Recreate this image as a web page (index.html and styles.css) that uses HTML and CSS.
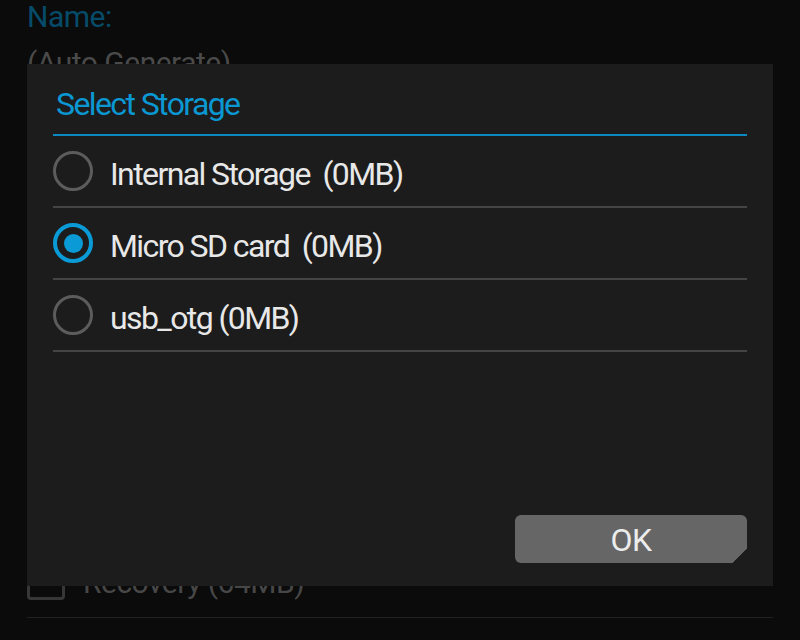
FILE: index.html
```html
<!DOCTYPE html>
<html>
<head>
<meta charset="utf-8">
<link rel="stylesheet" href="styles.css">
</head>
<body>
<div class="screen">
  <div class="bg-content">
    <div class="bg-label">Name:</div>
    <div class="bg-value">(Auto Generate)</div>
    <div class="bg-spacer"></div>
    <div class="bg-row">
      <span class="bg-check"></span>
      <span class="bg-row-text">Recovery (64MB)</span>
    </div>
    <div class="bg-divider"></div>
  </div>

  <div class="dialog">
    <div class="dialog-title">Select Storage</div>
    <div class="option">
      <span class="radio"></span>
      <span class="option-text">Internal Storage&nbsp; (0MB)</span>
    </div>
    <div class="option">
      <span class="radio radio-on"></span>
      <span class="option-text">Micro SD card&nbsp; (0MB)</span>
    </div>
    <div class="option">
      <span class="radio"></span>
      <span class="option-text">usb_otg (0MB)</span>
    </div>
    <div class="dialog-fill"></div>
    <div class="dialog-actions">
      <div class="ok-btn">OK</div>
    </div>
  </div>
</div>
</body>
</html>
```

FILE: styles.css
```css
html, body {
  margin: 0;
  padding: 0;
  background: #0b0b0b;
}
body {
  width: 800px;
  height: 640px;
  overflow: hidden;
  font-family: Roboto, "Liberation Sans", sans-serif;
}
.screen {
  position: relative;
  width: 800px;
  height: 640px;
  background: #0b0b0b;
}
.bg-content {
  display: flex;
  flex-direction: column;
  padding: 0 27px;
  height: 640px;
  box-sizing: border-box;
}
.bg-label {
  color: #064b69;
  font-size: 30px;
  letter-spacing: -0.5px;
  line-height: 34px;
}
.bg-value {
  color: #4a4a4a;
  font-size: 30px;
  letter-spacing: -0.5px;
  line-height: 34px;
  margin-top: 12px;
}
.bg-spacer {
  flex: 1;
}
.bg-row {
  display: flex;
  align-items: center;
  gap: 18px;
  height: 40px;
  margin-bottom: 16px;
}
.bg-check {
  width: 32px;
  height: 32px;
  border: 3px solid #373737;
  border-radius: 4px;
}
.bg-row-text {
  color: #474747;
  font-size: 30px;
  letter-spacing: -0.5px;
  margin-top: 2px;
}
.bg-divider {
  height: 1px;
  background: #222;
  margin-bottom: 22px;
}

.dialog {
  position: absolute;
  left: 27px;
  top: 64px;
  width: 746px;
  height: 522px;
  background: #1c1c1c;
  box-sizing: border-box;
  padding: 0 26px 23px 26px;
  display: flex;
  flex-direction: column;
}
.dialog-title {
  height: 70px;
  border-bottom: 2px solid #0a88bf;
  color: #0b98d2;
  font-size: 32px;
  letter-spacing: -1.6px;
  line-height: 80px;
  padding-left: 3px;
  flex: none;
}
.option {
  display: flex;
  align-items: center;
  height: 70px;
  border-bottom: 2px solid #444;
  flex: none;
}
.radio {
  width: 34px;
  height: 34px;
  border: 3px solid #5c5c5c;
  border-radius: 50%;
  margin-right: 17px;
  display: flex;
  align-items: center;
  justify-content: center;
  flex: none;
}
.radio-on {
  border: 4px solid #0a9ad6;
  width: 32px;
  height: 32px;
}
.radio-on::after {
  content: "";
  width: 19px;
  height: 19px;
  border-radius: 50%;
  background: #0a9ad6;
}
.option-text {
  color: #e8e8e8;
  font-size: 32px;
  letter-spacing: -1.6px;
  margin-top: 5px;
}
.dialog-fill {
  flex: 1;
}
.dialog-actions {
  display: flex;
  justify-content: flex-end;
}
.ok-btn {
  width: 232px;
  height: 48px;
  border-radius: 6px;
  background: linear-gradient(-45deg, transparent 10px, #666 10px);
  color: #ececec;
  font-size: 32px;
  letter-spacing: -0.5px;
  display: flex;
  align-items: center;
  justify-content: center;
  padding-top: 2px;
  box-sizing: border-box;
}
```
